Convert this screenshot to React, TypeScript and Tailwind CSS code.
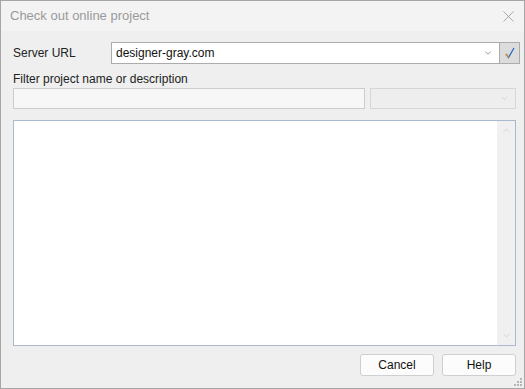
import { ChevronDown, ChevronUp, X } from "lucide-react";

const font = { fontFamily: '"Segoe UI", "Liberation Sans", Arial, sans-serif' };

const App = () => {
  return (
    <div className="relative w-[525px] h-[389px] border border-[#a6a6a6] bg-[#efefef] flex flex-col text-[12px] text-[#222]" style={font}>
      <div className="h-[30px] bg-[#f3f3f3] flex items-center justify-between pl-[9px] pr-[6px] shrink-0">
        <span className="text-[13px] text-[#9a9a9a]">Check out online project</span>
        <X size={19} strokeWidth={0.9} className="text-[#8a8a8a]" />
      </div>

      <div className="flex flex-col flex-1 pl-[12px] pr-[8px] pt-[11px] pb-[12px]">
        <div className="flex items-center h-[22px] -mr-[4px]">
          <span className="w-[98px]">Server URL</span>
          <div className="flex-1 h-[22px] bg-white border border-[#acacac] flex items-center pl-[4px] pr-[6px]">
            <span className="flex-1 text-[#111]">designer-gray.com</span>
            <ChevronDown size={10} strokeWidth={1.6} className="text-[#666]" />
          </div>
          <div className="w-[20px] h-[22px] bg-[#dcdcdc] border border-l-0 border-[#acacac] flex items-center justify-center">
            <svg width="12" height="12" viewBox="0 0 12 12">
              <path d="M2 7 L4.5 10.5 L10 1" fill="none" stroke="#2b6cc4" strokeWidth="1.3" />
              <path d="M2 7 L4.5 10.5" fill="none" stroke="#e3902a" strokeWidth="1.3" />
            </svg>
          </div>
        </div>

        <span className="mt-[6px] leading-[18px]">Filter project name or description</span>

        <div className="flex gap-[5px] h-[21px]">
          <div className="w-[352px] bg-[#f7f7f7] border border-[#cccccc]" />
          <div className="flex-1 bg-[#eeeeee] border border-[#d6d6d6] flex items-center justify-end pr-[6px]">
            <ChevronDown size={9} strokeWidth={1.5} className="text-[#bbb]" />
          </div>
        </div>

        <div className="mt-[11px] flex-1 bg-white border border-[#a9bacf] flex justify-end">
          <div className="w-[18px] bg-[#f0f0f0] flex flex-col items-center justify-between py-[4px]">
            <ChevronUp size={11} strokeWidth={1.3} className="text-[#c4c4c4]" />
            <ChevronDown size={11} strokeWidth={1.3} className="text-[#c4c4c4]" />
          </div>
        </div>

        <div className="flex justify-end gap-[8px] mt-[8px]">
          <button className="w-[74px] h-[22px] rounded-[3px] border border-[#cfcfcf] bg-[#fcfcfc] text-[12px] text-[#111]">Cancel</button>
          <button className="w-[74px] h-[22px] rounded-[3px] border border-[#cfcfcf] bg-[#fcfcfc] text-[12px] text-[#111]">Help</button>
        </div>
      </div>

      <svg className="absolute right-[2px] bottom-[2px]" width="8" height="8" viewBox="0 0 8 8">
        <rect x="6" y="0" width="2" height="2" fill="#b5b5b5" />
        <rect x="3" y="3" width="2" height="2" fill="#b5b5b5" />
        <rect x="6" y="3" width="2" height="2" fill="#b5b5b5" />
        <rect x="0" y="6" width="2" height="2" fill="#b5b5b5" />
        <rect x="3" y="6" width="2" height="2" fill="#b5b5b5" />
        <rect x="6" y="6" width="2" height="2" fill="#b5b5b5" />
      </svg>
    </div>
  );
};

export default App;
